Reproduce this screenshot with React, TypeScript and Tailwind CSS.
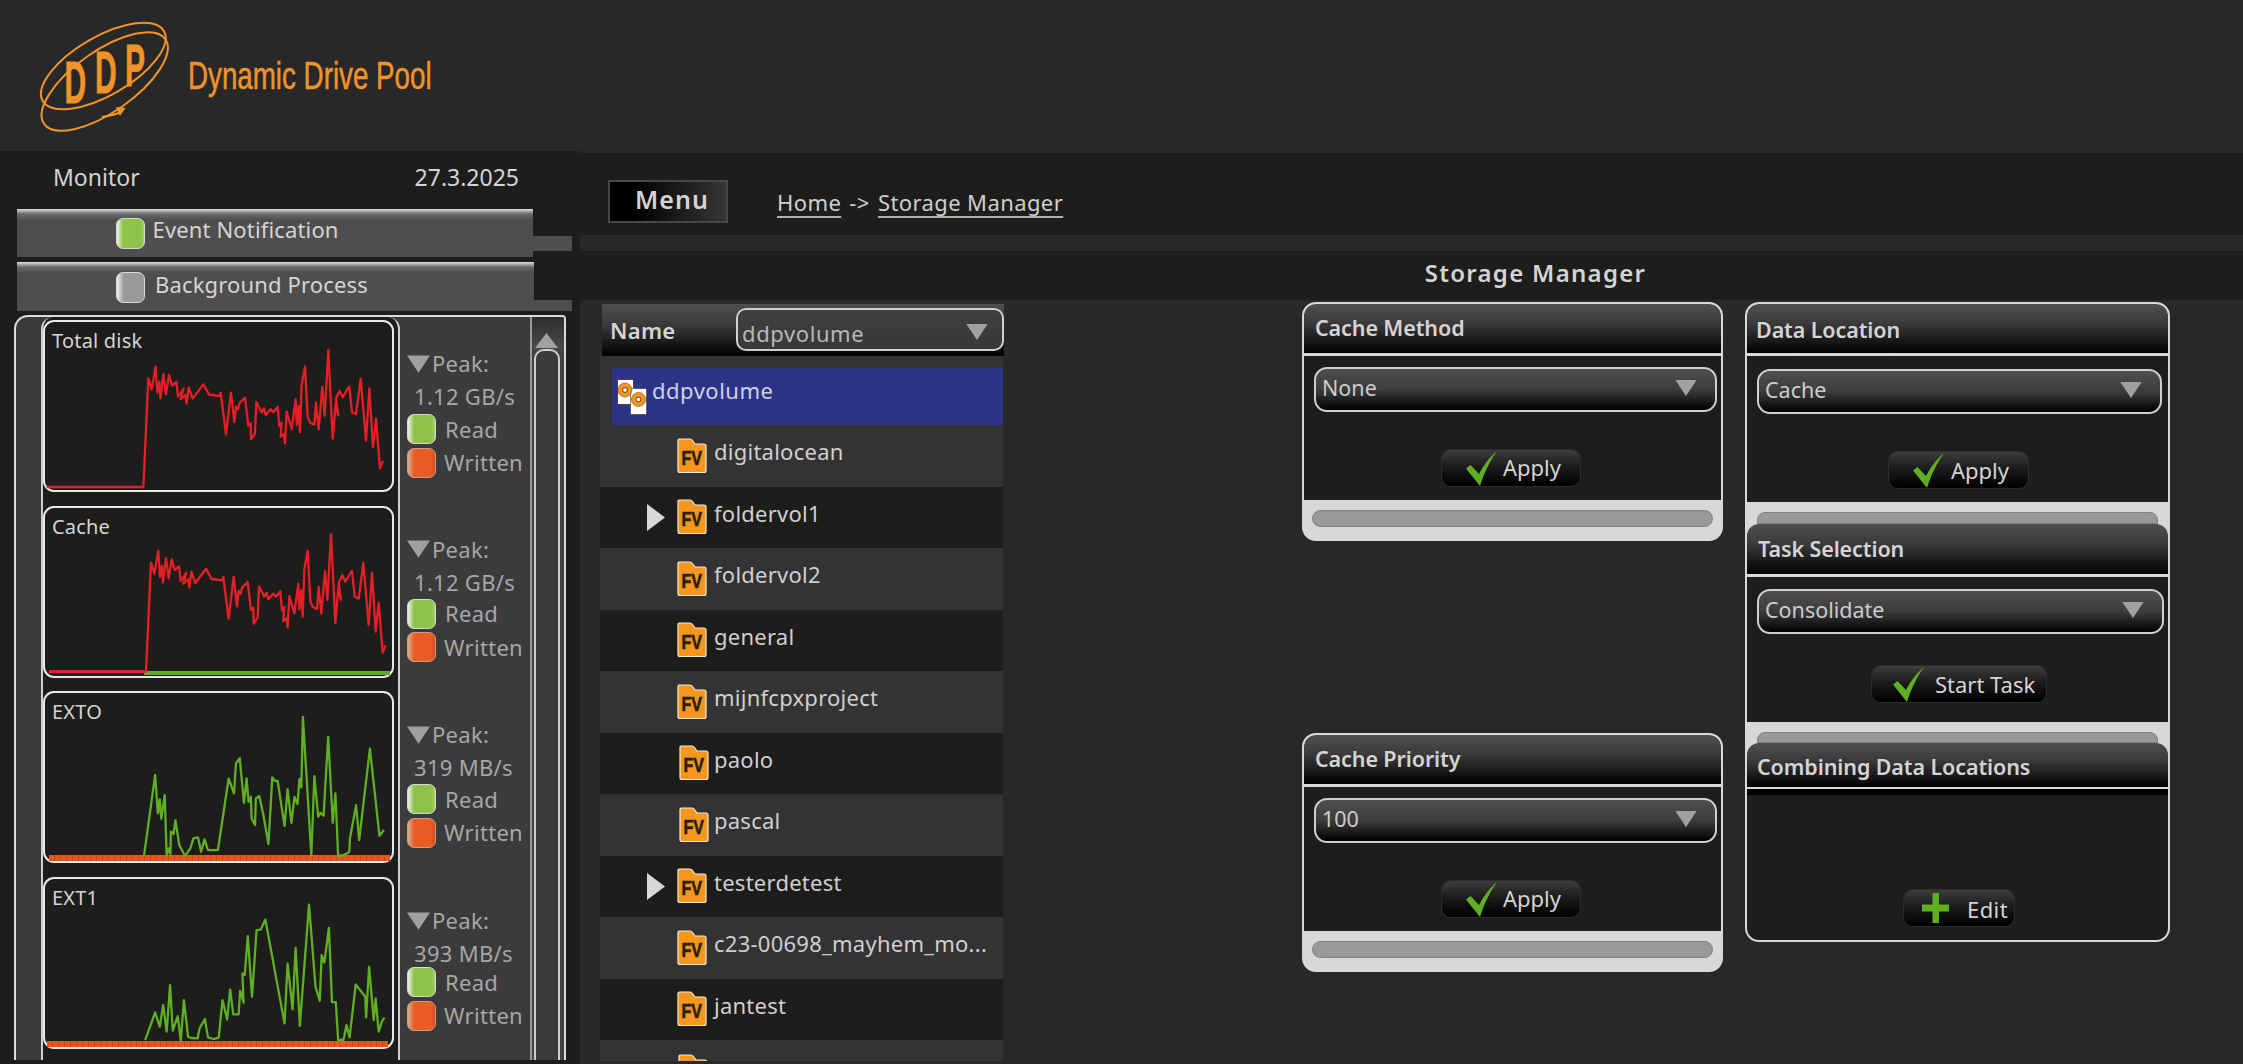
import React from "react";

const c1 = "50,471 340,471 355,145 365,178 377,110 382,188 388,155 391,205 400,132 408,192 417,135 426,167 439,156 444,200 455,185 461,175 452,208 466,195 470,220 476,172 488,206 520,163 537,194 570,198 572,188 588,313 603,188 613,276 618,230 624,238 628,220 645,203 655,287 662,280 663,328 675,310 679,216 695,247 702,235 707,255 722,238 730,247 743,231 748,288 755,278 752,320 762,312 765,340 770,245 785,297 797,208 800,285 806,228 810,307 815,165 825,110 833,260 840,278 853,284 858,218 866,298 877,170 884,257 895,60 908,326 918,210 920,238 925,256 918,205 929,183 938,202 955,173 958,170 966,247 978,253 992,146 1008,332 1018,175 1029,352 1038,266 1050,415 1059,393";
const c3 = "377,526 406,284 413,400 418,358 422,416 431,345 436,526 441,505 446,522 447,455 454,462 459,420 469,495 484,528 498,505 506,475 518,472 526,515 535,478 544,510 570,510 598,295 612,340 617,250 627,234 638,368 645,295 650,365 656,350 658,415 667,435 669,355 678,348 688,400 702,492 712,292 720,303 726,302 744,438 752,327 762,428 770,350 778,372 783,296 788,322 792,110 814,526 822,288 832,410 838,398 846,407 858,170 870,428 877,340 884,526 898,526 913,516 915,475 931,375 939,480 967,205 992,467 1004,450";
const c4 = "380,1080 406,997 418,1040 427,975 436,1055 445,915 452,1052 465,1008 473,1082 481,960 492,1070 500,1074 517,1075 522,1045 536,1017 544,1072 558,1077 572,1073 582,960 594,1018 602,928 610,1003 624,1003 628,932 637,968 634,880 640,885 648,768 659,950 671,750 682,748 694,718 744,1030 752,850 765,988 773,803 784,1038 808,673 825,920 836,962 841,825 848,847 860,743 868,966 878,966 884,1080 898,1080 906,1035 914,1072 930,913 955,950 957,1012 965,860 977,1020 982,955 990,1055 998,1025 1005,1013";

function Tri({ className }: { className: string }) {
  return (
    <svg className={className} viewBox="0 0 24 18">
      <polygon points="0,0 24,0 12,18" fill="#a0a0a0" />
    </svg>
  );
}

function Swatch({ kind, className }: { kind: "green" | "orange" | "gray"; className: string }) {
  const bg =
    kind === "green"
      ? "bg-[linear-gradient(90deg,#f0f0f0_0%,#8fc347_22%,#8fc347_88%,#a8d070_100%)] border-[#d8d8d8]"
      : kind === "orange"
        ? "bg-[linear-gradient(90deg,#d8b090_0%,#e95c26_22%,#e95c26_85%,#d84a20_100%)] border-[#c8a080]"
        : "bg-[linear-gradient(90deg,#eeeeee_0%,#9a9a9a_25%,#9a9a9a_100%)] border-[#d8d8d8]";
  return <div className={`${className} rounded-[7px] border ${bg}`} />;
}

function Chart({ label, children }: { label: string; children: React.ReactNode }) {
  return (
    <div className="relative h-[172px] w-[351px] rounded-[11px] border-2 border-[#e8e8e8] bg-[#1d1d1c]">
      <div className="pl-[7px] pt-[6px] text-[20px] leading-[26px] tracking-[0.2px] text-[#d4d4d4]">{label}</div>
      {children}
    </div>
  );
}

function Side({ peak, nudge }: { peak: string; nudge: string }) {
  return (
    <div className="h-[185.7px] pl-[7px] pt-[27px] text-[22px] leading-[33px] tracking-[0.3px] text-[#a6a6a6]">
      <div className="flex h-[33px] items-center">
        <Tri className="h-[18px] w-[23px]" />
        <span className="ml-[2px]">Peak:</span>
      </div>
      <div className="h-[33px] pl-[7px] whitespace-nowrap">{peak}</div>
      <div className={`flex h-[32px] items-center ${nudge}`}>
        <Swatch kind="green" className="h-[30px] w-[29px]" />
        <span className="ml-[9px]">Read</span>
      </div>
      <div className="mt-[2px] flex h-[31px] items-center">
        <Swatch kind="orange" className="h-[30px] w-[29px]" />
        <span className="ml-[8px]">Written</span>
      </div>
    </div>
  );
}

function Bars({ className }: { className: string }) {
  return (
    <div className={`absolute bottom-0 h-[6px] w-[341px] bg-[repeating-linear-gradient(90deg,#e8561e_0px,#e8561e_5px,#c44a1c_5px,#c44a1c_6px)] ${className}`} />
  );
}

function Sidebar() {
  return (
    <aside className="h-[913px] w-[580px] shrink-0 bg-[#1d1d1c] pt-[1px]">
      <div className="flex h-[51px] items-center justify-between pl-[53px] pr-[61px] text-[23px] text-[#d4d4d4]">
        <span>Monitor</span>
        <span>27.3.2025</span>
      </div>
      <div className="h-[6px]" />
      <div className="ml-[16.5px] flex items-start">
        <div className="flex h-[48px] w-[516px] items-center bg-[linear-gradient(#e0e0e0_0px,#6a6a6a_5px,#4f4e4f_11px,#4f4e4f_100%)] pl-[99px] pt-[1px]">
          <Swatch kind="green" className="h-[31px] w-[29px]" />
          <span className="-mt-[8px] ml-[8px] text-[22px] tracking-[0.15px] text-[#d4d4d4]">Event Notification</span>
        </div>
        <div className="mt-[27px] h-[15px] w-[39px] bg-[#4f4e4f]" />
      </div>
      <div className="ml-[17px] mt-[5px] flex items-start">
        <div className="flex h-[49px] w-[517px] items-center bg-[linear-gradient(#e0e0e0_0px,#6a6a6a_5px,#4f4e4f_11px,#4f4e4f_100%)] pl-[99px] pt-[1px]">
          <Swatch kind="gray" className="h-[31px] w-[29px]" />
          <span className="-mt-[6px] ml-[10px] text-[22px] tracking-[0.15px] text-[#d4d4d4]">Background Process</span>
        </div>
        <div className="mt-[38px] h-[11px] w-[38px] bg-[#4f4e4f]" />
      </div>
      <div className="ml-[14px] mt-[4px] flex h-[745px] w-[552px] overflow-hidden rounded-tl-[14px] rounded-tr-[4px] border-x-2 border-t-2 border-[#dcdcdc] bg-[#3b3b3b]">
        <div className="w-[25px] shrink-0" />
        <div className="flex w-[359px] shrink-0 flex-col gap-[13.7px] rounded-t-[12px] border-x-2 border-[#cfcfcf] bg-[#1d1d1c] pt-[3px]">
          <Chart label="Total disk">
            <svg className="absolute -left-[2px] -top-[2px] h-[172px] w-[351px]" viewBox="39 -30 1053 516" preserveAspectRatio="none">
              <polyline points={c1} fill="none" stroke="#e41f26" strokeWidth="2.3" vectorEffect="non-scaling-stroke" strokeLinejoin="round" />
            </svg>
          </Chart>
          <Chart label="Cache">
            <div className="absolute bottom-[1px] left-[99px] h-[4px] w-[246px] bg-[#5fae23]" />
            <div className="absolute bottom-[3px] left-[4px] h-[3px] w-[97px] bg-[#e81e4d]" />
            <svg className="absolute -left-[2px] -top-[2px] h-[172px] w-[351px]" viewBox="31 -25 1053 516" preserveAspectRatio="none">
              <polyline points={c1} fill="none" stroke="#e41f26" strokeWidth="2.3" vectorEffect="non-scaling-stroke" strokeLinejoin="round" />
            </svg>
          </Chart>
          <Chart label="EXTO">
            <Bars className="left-[4px]" />
            <svg className="absolute -left-[2px] -top-[2px] h-[172px] w-[351px]" viewBox="113 32 917 517" preserveAspectRatio="none">
              <polyline points={c3} fill="none" stroke="#5fae23" strokeWidth="2.3" vectorEffect="non-scaling-stroke" strokeLinejoin="round" />
            </svg>
          </Chart>
          <Chart label="EXT1">
            <Bars className="left-[2px]" />
            <svg className="absolute -left-[2px] -top-[2px] h-[172px] w-[351px]" viewBox="113 590 917 517" preserveAspectRatio="none">
              <polyline points={c4} fill="none" stroke="#5fae23" strokeWidth="2.3" vectorEffect="non-scaling-stroke" strokeLinejoin="round" />
            </svg>
          </Chart>
        </div>
        <div className="w-[130px] shrink-0 pt-[3px]">
          <Side peak="1.12 GB/s" nudge="" />
          <Side peak="1.12 GB/s" nudge="-mt-[1px]" />
          <Side peak="319 MB/s" nudge="-mt-[1px]" />
          <Side peak="393 MB/s" nudge="-mt-[4px]" />
        </div>
        <div className="relative flex-1 border-l-2 border-[#9a9a9a] bg-[#434343]">
          <div className="flex h-[32px] items-end justify-center bg-[linear-gradient(#2e2e2e,#4a4a4a)] pb-[1px] pr-[4px]">
            <svg className="h-[15px] w-[23px]" viewBox="0 0 23 15">
              <polygon points="0,15 23,15 11.5,0" fill="#a0a0a0" />
            </svg>
          </div>
          <div className="ml-[2px] h-[720px] w-[26px] rounded-t-[10px] border-2 border-[#cfcfcf] bg-[#3b3b3b]" />
        </div>
      </div>
    </aside>
  );
}

function FolderIcon({ bare }: { bare?: boolean }) {
  return (
    <svg className="h-[36px] w-[30px] shrink-0" viewBox="0 0 30 36">
      <path d="M2 1 H13 Q14.5 1 15.5 2.5 L18 6 H27 Q29 6 29 8 V32.5 Q29 34.5 27 34.5 H3 Q1 34.5 1 32.5 V2 Z" fill="#f5961f" stroke="#f4eadc" strokeWidth="1.2" />
      {!bare && (
        <text x="4.5" y="27" fontFamily="'Liberation Sans'" fontWeight="700" fontSize="21" fill="#2a1f12" stroke="#2a1f12" strokeWidth="0.7" textLength="20.5" lengthAdjust="spacingAndGlyphs">FV</text>
      )}
    </svg>
  );
}

function VolumeIcon() {
  return (
    <svg className="h-[36px] w-[30px] shrink-0" viewBox="0 0 30 36">
      <rect x="0.5" y="0.5" width="16" height="25" fill="#fff" stroke="#444" />
      <rect x="13.5" y="9.5" width="16" height="26" fill="#fff" stroke="#333" strokeWidth="0.6" />
      <circle cx="8" cy="11" r="7" fill="#f5961f" stroke="#7a4a10" strokeWidth="0.6" />
      <circle cx="8" cy="11" r="2.4" fill="#fff" stroke="#5a3a10" />
      <circle cx="21.5" cy="20.5" r="7" fill="#f5961f" stroke="#7a4a10" strokeWidth="0.6" />
      <circle cx="21.5" cy="20.5" r="2.4" fill="#fff" stroke="#5a3a10" />
    </svg>
  );
}

function Row({ name, light, arrow, shift }: { name: string; light: boolean; arrow?: boolean; shift?: boolean }) {
  return (
    <div className={`flex h-[61.5px] w-[403px] items-center ${light ? "bg-[#333333]" : "bg-[#1d1d1c]"}`}>
      <div className="flex w-[77px] shrink-0 justify-end pr-[12px]">
        {arrow && (
          <svg className="h-[27px] w-[18px]" viewBox="0 0 18 27">
            <polygon points="0,0 18,13.5 0,27" fill="#d8d8d8" />
          </svg>
        )}
      </div>
      <div className={shift ? "ml-[2px]" : ""}>
        <FolderIcon />
      </div>
      <span className={`-mt-[8px] text-[22px] tracking-[0.25px] text-[#cfcfcf] ${shift ? "ml-[5px]" : "ml-[7px]"}`}>{name}</span>
    </div>
  );
}

function NameList() {
  return (
    <div className="mt-[4px] h-[757px] w-[404px] overflow-hidden">
      <div className="ml-[2px] flex h-[52px] items-center bg-[linear-gradient(#504f50_0%,#3a3a3a_40%,#000_100%)]">
        <span className="ml-[8px] w-[126px] text-[22px] font-semibold tracking-[0.3px] text-[#d4d4d4]">Name</span>
        <div className="-mt-[2px] flex h-[43px] w-[268px] items-center justify-between rounded-[10px] border-2 border-[#cfcfcf] bg-[linear-gradient(#3f3f3f,#383838)] pl-[4px] pr-[13px]">
          <span className="mt-[8px] text-[22px] tracking-[0.6px] text-[#b8b8b8]">ddpvolume</span>
          <Tri className="mt-[6px] h-[16px] w-[24px]" />
        </div>
      </div>
      <div className="h-[69px] w-[403px] bg-[#333333] pl-[12px] pt-[12px]">
        <div className="flex h-[57px] items-start bg-[#2c3488] pl-[5px] pt-[11px]">
          <VolumeIcon />
          <span className="-mt-[5px] ml-[5px] text-[22px] tracking-[0.5px] text-[#cfd0e0]">ddpvolume</span>
        </div>
      </div>
      <Row name="digitalocean" light />
      <Row name="foldervol1" light={false} arrow />
      <Row name="foldervol2" light />
      <Row name="general" light={false} />
      <Row name="mijnfcpxproject" light />
      <Row name="paolo" light={false} shift />
      <Row name="pascal" light shift />
      <Row name="testerdetest" light={false} arrow />
      <Row name="c23-00698_mayhem_mo..." light />
      <Row name="jantest" light={false} />
      <div className="h-[21px] w-[403px] overflow-hidden bg-[#333333] pl-[78px] pt-[14px]">
        <FolderIcon bare />
      </div>
    </div>
  );
}

function Check() {
  return (
    <svg className="h-[35px] w-[31px] shrink-0" viewBox="0 0 31 35">
      <path d="M0 17.5 L4.5 14 L13 23 C18 13 24 6 31 0 C24 10 18 22 14 35 Z" fill="#5fae23" />
    </svg>
  );
}

function Plus() {
  return (
    <svg className="h-[30px] w-[27px] shrink-0" viewBox="0 0 27 30">
      <rect x="10.5" y="0" width="6.5" height="30" fill="#5fae23" />
      <rect x="0" y="11.5" width="27" height="7" fill="#5fae23" />
    </svg>
  );
}

function Btn({ children, className }: { children: React.ReactNode; className: string }) {
  return (
    <div className={`flex h-[38px] items-center rounded-[10px] border border-[#2c2c2c] bg-[linear-gradient(#3d3d3d_0%,#1c1c1c_45%,#000_100%)] text-[22px] text-[#d4d4d4] ${className}`}>
      {children}
    </div>
  );
}

function Select({ value, className }: { value: string; className: string }) {
  return (
    <div className={`flex h-[45px] items-center justify-between rounded-[13px] border-2 border-[#cfcfcf] bg-[linear-gradient(#504f50_0%,#3c3c3c_50%,#000_100%)] pl-[6px] pr-[17px] ${className}`}>
      <span className="-mt-[3px] text-[21.5px] text-[#cccccc]">{value}</span>
      <Tri className="-mt-[3px] h-[16px] w-[24px]" />
    </div>
  );
}

function Head({ title, className, textClass }: { title: string; className: string; textClass: string }) {
  return (
    <div className={`flex items-center bg-[linear-gradient(#504f50_0%,#3a3a3a_40%,#000_100%)] text-[21.5px] font-semibold tracking-[-0.1px] text-[#d4d4d4] ${className}`}>
      <span className={textClass}>{title}</span>
    </div>
  );
}

function CachePanel({ title, value, className, textClass }: { title: string; value: string; className: string; textClass: string }) {
  return (
    <div className={`h-[239px] w-[421px] overflow-hidden rounded-[14px] border-[2.5px] border-[#d8d8d8] bg-[#d8d8d8] ${className}`}>
      <Head title={title} className="h-[49px] rounded-t-[11px] pl-[11px]" textClass={textClass} />
      <div className="mt-[3px] h-[144px] bg-[#1d1d1c] pt-[11px]">
        <Select value={value} className="ml-[10px] w-[403px]" />
        <Btn className="ml-[137px] mt-[37px] w-[140px] pl-[24px]">
          <Check />
          <span className="-mt-[2px] ml-[6px]">Apply</span>
        </Btn>
      </div>
      <div className="mx-[8px] mt-[10px] h-[17px] rounded-full border border-[#808080] bg-[#999999]" />
    </div>
  );
}

function RightPanel() {
  return (
    <div className="ml-[22px] mt-[2px] h-[640px] w-[425px] overflow-hidden rounded-[14px] border-[2.5px] border-[#d8d8d8] bg-[#d8d8d8]">
      <Head title="Data Location" className="h-[49px] rounded-t-[11px] pl-[9px]" textClass="mt-[4px]" />
      <div className="mt-[3px] h-[146px] bg-[#1d1d1c] pt-[13px]">
        <Select value="Cache" className="ml-[10px] w-[405px]" />
        <Btn className="ml-[141px] mt-[37px] w-[141px] pl-[24px]">
          <Check />
          <span className="ml-[7px]">Apply</span>
        </Btn>
      </div>
      <div className="mx-[10px] mt-[10px] h-[12px] rounded-t-[8px] border border-[#808080] bg-[#999999]" />
      <Head title="Task Selection" className="h-[50px] rounded-t-[12px] pl-[11px]" textClass="mt-[1px]" />
      <div className="mt-[3px] h-[145px] bg-[#1d1d1c] pt-[12px]">
        <Select value="Consolidate" className="ml-[10px] w-[407px]" />
        <Btn className="ml-[124px] mt-[31px] w-[176px] pl-[21px]">
          <Check />
          <span className="ml-[11px]">Start Task</span>
        </Btn>
      </div>
      <div className="mx-[10px] mt-[10px] h-[11px] rounded-t-[8px] border border-[#808080] bg-[#999999]" />
      <Head title="Combining Data Locations" className="h-[44px] rounded-t-[12px] pl-[10px]" textClass="mt-[5px]" />
      <div className="mt-[2px] h-[6px] bg-black" />
      <div className="h-[146px] bg-[#1d1d1c] pt-[94px]">
        <Btn className="ml-[156px] w-[112px] pl-[18px]">
          <Plus />
          <span className="ml-[18px] mt-[2px] tracking-[0.4px]">Edit</span>
        </Btn>
      </div>
    </div>
  );
}

export default function App() {
  return (
    <div className="h-[1064px] w-[2243px] overflow-hidden bg-[#282828] font-['Noto_Sans',sans-serif]">
      <header className="flex h-[151px] items-start pl-[36px] pt-[20px]">
        <svg className="h-[115px] w-[135px] shrink-0" viewBox="36 20 135 115">
          <ellipse cx="103.3" cy="66" rx="70" ry="29.3" transform="rotate(-30 103.3 66)" fill="none" stroke="#f0942a" strokeWidth="2" />
          <ellipse cx="104.7" cy="81.5" rx="74" ry="30.5" transform="rotate(-35 104.7 81.5)" fill="none" stroke="#f0942a" strokeWidth="2" />
          <g fill="#f0942a" stroke="#f0942a" strokeWidth="0.8" fontFamily="'Liberation Sans'" fontWeight="700" fontSize="60">
            <text transform="translate(64.5 103) scale(0.5 1)">D</text>
            <text transform="translate(95 93) scale(0.5 1)">D</text>
            <text transform="translate(125 86) scale(0.5 1)">P</text>
          </g>
          <path d="M102 117 C108 116 114 115 120 112.5" fill="none" stroke="#f0942a" strokeWidth="2" />
          <polygon points="116,107 125.5,108 120,116" fill="#f0942a" />
        </svg>
        <div className="ml-[17px] mt-[34px] origin-left scale-x-[0.73] whitespace-nowrap font-['Liberation_Sans',sans-serif] text-[38px] leading-[44px] text-[#f0942a] [-webkit-text-stroke:0.5px_#f0942a]">
          Dynamic Drive Pool
        </div>
      </header>
      <div className="flex">
        <Sidebar />
        <main className="flex-1">
          <div className="mt-[2px] flex h-[82px] items-start bg-[#1d1d1c] pl-[28px] pt-[27px]">
            <div className="flex h-[43px] w-[120px] items-center justify-center border-2 border-[#474747] bg-[linear-gradient(90deg,#000_0%,#000_20%,#363636_100%)] pb-[4px] pl-[8px] text-[25px] font-semibold tracking-[1px] text-[#d4d4d4]">
              Menu
            </div>
            <div className="ml-[49px] mt-[6px] text-[22px] tracking-[0.4px] text-[#cfcfcf]">
              <span className="underline decoration-[#b0b0b0] decoration-2 underline-offset-[5px]">Home</span>
              <span className="mx-[2px]"> -&gt; </span>
              <span className="underline decoration-[#b0b0b0] decoration-2 underline-offset-[5px]">Storage Manager</span>
            </div>
          </div>
          <div className="h-[16px]" />
          <div className="h-[49px] bg-[#1d1d1c] pl-[248px] text-center text-[24px] font-semibold leading-[43px] tracking-[1.3px] text-[#d4d4d4]">
            Storage Manager
          </div>
          <div className="flex items-start pl-[20px]">
            <NameList />
            <div className="ml-[298px] mt-[2px]">
              <CachePanel title="Cache Method" value="None" className="" textClass="-mt-[1px]" />
              <CachePanel title="Cache Priority" value="100" className="mt-[192px]" textClass="-mt-[1px]" />
            </div>
            <RightPanel />
          </div>
        </main>
      </div>
    </div>
  );
}
